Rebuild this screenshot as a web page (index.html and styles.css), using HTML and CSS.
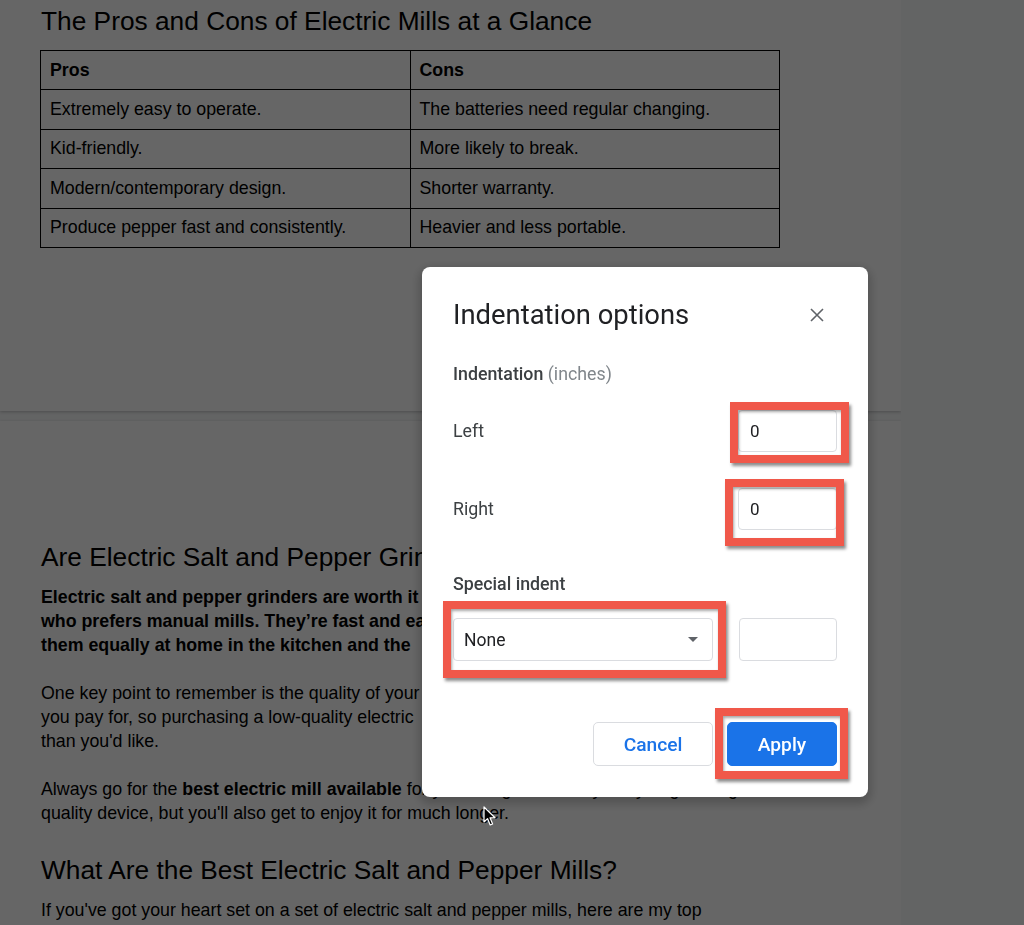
FILE: index.html
```html
<!DOCTYPE html>
<html lang="en">
<head>
<meta charset="utf-8">
<title>Indentation options</title>
<link rel="stylesheet" href="styles.css">
</head>
<body>
<div class="doc">
  <section class="page page-one">
    <h2 class="doc-heading">The Pros and Cons of Electric Mills at a Glance</h2>
    <table class="pc-table">
      <tr><th>Pros</th><th>Cons</th></tr>
      <tr><td>Extremely easy to operate.</td><td>The batteries need regular changing.</td></tr>
      <tr><td>Kid-friendly.</td><td>More likely to break.</td></tr>
      <tr><td>Modern/contemporary design.</td><td>Shorter warranty.</td></tr>
      <tr><td>Produce pepper fast and consistently.</td><td>Heavier and less portable.</td></tr>
    </table>
  </section>
  <section class="page page-two">
    <h2 class="doc-heading">Are Electric Salt and Pepper Grinders</h2>
    <p class="doc-p strong">Electric salt and pepper grinders are worth it<br>who prefers manual mills. They’re fast and easy<br>them equally at home in the kitchen and the</p>
    <p class="doc-p">One key point to remember is the quality of your<br>you pay for, so purchasing a low-quality electric<br>than you'd like.</p>
    <p class="doc-p">Always go for the <b>best electric mill available</b> for your budget. Not only will you get a high-<br>quality device, but you'll also get to enjoy it for much longer.</p>
    <h2 class="doc-heading h-second">What Are the Best Electric Salt and Pepper Mills?</h2>
    <p class="doc-p">If you've got your heart set on a set of electric salt and pepper mills, here are my top</p>
  </section>
</div>

<div class="overlay"></div>

<div class="dialog">
  <div class="dlg-head">
    <h1 class="dlg-title">Indentation options</h1>
    <svg class="dlg-close" width="14" height="14" viewBox="0 0 14 14"><path d="M1 1L13 13M13 1L1 13" stroke="#5f6368" stroke-width="1.6" fill="none"/></svg>
  </div>
  <div class="dlg-section"><span class="sec-strong">Indentation</span> <span class="sec-unit">(inches)</span></div>
  <div class="dlg-row row-left">
    <span class="dlg-label">Left</span>
    <div class="dlg-input">0</div>
  </div>
  <div class="dlg-row row-right">
    <span class="dlg-label">Right</span>
    <div class="dlg-input">0</div>
  </div>
  <div class="dlg-section special">Special indent</div>
  <div class="dlg-row row-special">
    <div class="dlg-select"><span>None</span><svg width="10" height="5" viewBox="0 0 10 5"><path d="M0 0H10L5 5Z" fill="#5f6368"/></svg></div>
    <div class="dlg-input small"></div>
  </div>
  <div class="dlg-actions">
    <button class="btn btn-cancel">Cancel</button>
    <button class="btn btn-apply">Apply</button>
  </div>

  <div class="mark mark-left"></div>
  <div class="mark mark-right"></div>
  <div class="mark mark-select"></div>
  <div class="mark mark-apply"></div>
</div>

<svg class="cursor" width="14" height="21" viewBox="0 0 14 21"><path d="M1 1L1 16L4.5 12.6L7.2 19L9.6 18L7 11.8L12 11.8Z" fill="#000" stroke="#fff" stroke-width="1.2" stroke-linejoin="round"/></svg>
</body>
</html>
```

FILE: styles.css
```css
html, body {
  margin: 0;
  padding: 0;
}
body {
  background: #f8f9fa;
  width: 1024px;
  height: 925px;
  overflow: hidden;
  font-family: "Liberation Sans", Arial, sans-serif;
  color: #000;
}
.doc {
  display: flex;
  flex-direction: column;
  gap: 10px;
  width: 901px;
  height: 925px;
  overflow: hidden;
}
.page {
  background: #fff;
  box-shadow: 0 1px 3px rgba(60, 64, 67, 0.3);
  padding: 0 0 0 41px;
  box-sizing: border-box;
}
.page-one {
  height: 411px;
  flex-shrink: 0;
  padding-top: 5px;
}
.page-two {
  flex: 1;
  padding-top: 120px;
}
.doc-heading {
  margin: 0;
  font-size: 26.3px;
  line-height: 32px;
  font-weight: 400;
  white-space: nowrap;
}
.h-second {
  margin-top: 29px;
}
.pc-table {
  margin: 13px 0 0 -1px;
  border-collapse: collapse;
  width: 740px;
  font-size: 17.8px;
}
.pc-table th, .pc-table td {
  border: 1px solid #000;
  height: 39.4px;
  padding: 0 9px;
  text-align: left;
  width: 50%;
  box-sizing: border-box;
}
.pc-table th {
  font-weight: 700;
}
.doc-p {
  margin: 24px 0 0;
  font-size: 17.8px;
  line-height: 24px;
  white-space: nowrap;
}
.doc-heading + .doc-p {
  margin-top: 12px;
}
.strong {
  font-weight: 700;
}
.overlay {
  position: fixed;
  inset: 0;
  background: rgba(0, 0, 0, 0.6);
}
.dialog {
  position: fixed;
  left: 422px;
  top: 267px;
  width: 446px;
  height: 530px;
  box-sizing: border-box;
  padding: 32px 31px 31px;
  background: #fff;
  border-radius: 8px;
  box-shadow: 0 4px 10px 3px rgba(0, 0, 0, 0.2);
  display: flex;
  flex-direction: column;
  font-family: Roboto, "Noto Sans", sans-serif;
  color: #3c4043;
}
.dlg-head {
  display: flex;
  justify-content: space-between;
  align-items: center;
  height: 32px;
}
.dlg-title {
  margin: 0;
  font-size: 27.4px;
  line-height: 32px;
  font-weight: 400;
  color: #202124;
}
.dlg-close {
  margin-right: 13px;
}
.dlg-section {
  margin-top: 33px;
  font-size: 17.8px;
  line-height: 20px;
}
.sec-strong {
  font-weight: 500;
  color: #3c4043;
}
.sec-unit {
  color: #80868b;
}
.dlg-row {
  display: flex;
  justify-content: space-between;
  align-items: center;
}
.row-left {
  margin-top: 26px;
}
.row-right {
  margin-top: 36px;
}
.dlg-label {
  font-size: 17.8px;
  line-height: 20px;
}
.dlg-input {
  width: 99px;
  height: 42px;
  box-sizing: border-box;
  border: 1px solid #dadce0;
  border-radius: 4px;
  padding-left: 11px;
  font-size: 17px;
  line-height: 40px;
  color: #202124;
}
.dlg-section.special {
  margin-top: 44px;
  font-weight: 500;
}
.row-special {
  margin-top: 24px;
}
.dlg-select {
  width: 260px;
  height: 43px;
  box-sizing: border-box;
  border: 1px solid #dadce0;
  border-radius: 4px;
  display: flex;
  justify-content: space-between;
  align-items: center;
  padding: 0 14px 0 10px;
  font-size: 17.5px;
  color: #202124;
}
.dlg-input.small {
  width: 98px;
  height: 43px;
}
.dlg-actions {
  margin-top: auto;
  display: flex;
  justify-content: flex-end;
  gap: 14px;
}
.btn {
  height: 44px;
  border-radius: 5px;
  font-family: Roboto, "Noto Sans", sans-serif;
  font-size: 19.2px;
  font-weight: 500;
  cursor: pointer;
}
.btn-cancel {
  width: 120px;
  background: #fff;
  border: 1px solid #dadce0;
  color: #1a73e8;
}
.btn-apply {
  width: 110px;
  background: #1a73e8;
  border: 1px solid #1a73e8;
  color: #fff;
}
.mark {
  position: absolute;
  border: 8px solid #f0584a;
  box-sizing: border-box;
  box-shadow: 2px 3px 3px rgba(0, 0, 0, 0.45), inset 1px 2px 3px rgba(0, 0, 0, 0.35);
}
.mark-left {
  left: 308px;
  top: 135px;
  width: 119px;
  height: 61px;
}
.mark-right {
  left: 303px;
  top: 212px;
  width: 119px;
  height: 67px;
}
.mark-select {
  left: 21px;
  top: 334px;
  width: 283px;
  height: 77px;
}
.mark-apply {
  left: 293px;
  top: 441px;
  width: 133px;
  height: 71px;
}
.cursor {
  position: fixed;
  left: 483px;
  top: 806px;
}
```
